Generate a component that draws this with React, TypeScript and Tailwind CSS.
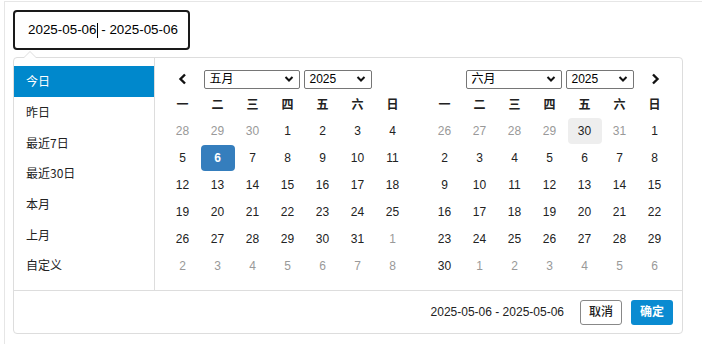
import React from 'react'

type Day = { d: number; muted?: boolean; selected?: boolean; hover?: boolean }

const WEEK = ['一', '二', '三', '四', '五', '六', '日']

const PRESETS = ['今日', '昨日', '最近7日', '最近30日', '本月', '上月', '自定义']

function range(a: number, b: number, muted = false): Day[] {
  const out: Day[] = []
  for (let i = a; i <= b; i++) out.push({ d: i, muted })
  return out
}

const mayDays: Day[] = [
  ...range(28, 30, true),
  ...range(1, 31).map((x) => (x.d === 6 ? { ...x, selected: true } : x)),
  ...range(1, 8, true),
]

const juneDays: Day[] = [
  ...range(26, 31, true).map((x) => (x.d === 30 ? { ...x, muted: false, hover: true } : x)),
  ...range(1, 30),
  ...range(1, 6, true),
]

function Chevron() {
  return (
    <svg className="w-[10px] h-[10px]" viewBox="0 0 10 10" fill="none" stroke="#111" strokeWidth={2}>
      <path d="M1.5 3l3.5 3.5L8.5 3" />
    </svg>
  )
}

function FakeSelect({ label, width }: { label: string; width: string }) {
  return (
    <div
      className={`${width} h-[19px] border border-[#767676] rounded-[2px] flex items-center justify-between pl-[5px] pr-[5px] text-[12px] text-black bg-white`}
    >
      <span className="leading-none">{label}</span>
      <Chevron />
    </div>
  )
}

function Calendar({ month, days, side }: { month: string; days: Day[]; side: 'left' | 'right' }) {
  return (
    <div className="w-[245px]">
      <div className="grid grid-cols-7 h-[26px] items-center">
        <div className="flex justify-center">
          {side === 'left' && (
            <svg className="w-[10px] h-[12px]" viewBox="0 0 10 12" fill="none" stroke="#111" strokeWidth={2.4}>
              <path d="M7 1.5L2.5 6 7 10.5" />
            </svg>
          )}
        </div>
        <div className="col-span-5 flex justify-center gap-1">
          <FakeSelect label={month} width="w-[96px]" />
          <FakeSelect label="2025" width="w-[68px]" />
        </div>
        <div className="flex justify-center">
          {side === 'right' && (
            <svg className="w-[10px] h-[12px]" viewBox="0 0 10 12" fill="none" stroke="#111" strokeWidth={2.4}>
              <path d="M3 1.5L7.5 6 3 10.5" />
            </svg>
          )}
        </div>
      </div>
      <div className="grid grid-cols-7 h-[25px] items-center">
        {WEEK.map((w) => (
          <div key={w} className="text-center text-[12px] font-bold text-[#222]">
            {w}
          </div>
        ))}
      </div>
      <div className="grid grid-cols-7">
        {days.map((day, i) => (
          <div key={i} className="h-[27px] flex items-center justify-center">
            <div
              className={`w-[34px] h-[26px] flex items-center justify-center rounded-[4px] text-[12px] ${
                day.selected
                  ? 'bg-[#357ebd] text-white font-bold'
                  : day.hover
                    ? 'bg-[#eeeeee] text-[#222]'
                    : day.muted
                      ? 'text-[#999]'
                      : 'text-[#222]'
              }`}
            >
              {day.d}
            </div>
          </div>
        ))}
      </div>
    </div>
  )
}

export default function App() {
  return (
    <div
      className="w-[702px] h-[344px] bg-white overflow-hidden"
      style={{ fontFamily: '"Liberation Sans", Arial, "Noto Sans CJK SC", sans-serif' }}
    >
      <div className="ml-1 mt-px h-[343px] border-t border-l border-[#e6e6e6] pl-[8px] pt-[8px]">
        {/* input */}
        <div className="w-[177px] h-[40px] border-2 border-[#1a1a1a] rounded-[4px] flex items-center pl-[13px] text-[13.4px] text-black">
          <span>2025-05-06</span>
          <span className="w-px h-[15px] bg-black" />
          <span className="whitespace-pre"> - 2025-05-06</span>
        </div>

        {/* popup */}
        <div className="relative mt-[7px] w-[670px] h-[277px] border border-[#dddddd] rounded-[4px] bg-white flex flex-col">
          <div className="absolute -top-[7px] left-[9px] w-0 h-0 border-l-[7px] border-r-[7px] border-b-[7px] border-l-transparent border-r-transparent border-b-[#dddddd]" />
          <div className="absolute -top-[6px] left-[10px] w-0 h-0 border-l-[6px] border-r-[6px] border-b-[6px] border-l-transparent border-r-transparent border-b-white" />

          <div className="flex h-[233px] border-b border-[#dddddd]">
            <div className="w-[141px] border-r border-[#dddddd] pt-[8px]">
              {PRESETS.map((p, i) => (
                <div
                  key={p}
                  className={`h-[30.7px] flex items-center pl-[12px] text-[12px] ${
                    i === 0 ? 'bg-[#0088cc] text-white' : 'text-[#222]'
                  }`}
                  style={{ fontFamily: '"Noto Sans CJK SC", sans-serif' }}
                >
                  {p}
                </div>
              ))}
            </div>
            <div className="flex-1 flex gap-[17px] pl-[10px] pt-[8px]">
              <Calendar month="五月" days={mayDays} side="left" />
              <Calendar month="六月" days={juneDays} side="right" />
            </div>
          </div>

          <div className="flex-1 flex items-center justify-end gap-[9px] pr-[9px]">
            <span className="text-[12px] text-[#222] mr-[7px]">2025-05-06 - 2025-05-06</span>
            <button className="w-[42px] h-[25px] border border-[#888] rounded-[3px] text-[12px] font-medium text-[#222] bg-white">
              取消
            </button>
            <button className="w-[42px] h-[25px] rounded-[3px] text-[12px] font-bold text-white bg-[#0a8bd1]">
              确定
            </button>
          </div>
        </div>
      </div>
    </div>
  )
}
